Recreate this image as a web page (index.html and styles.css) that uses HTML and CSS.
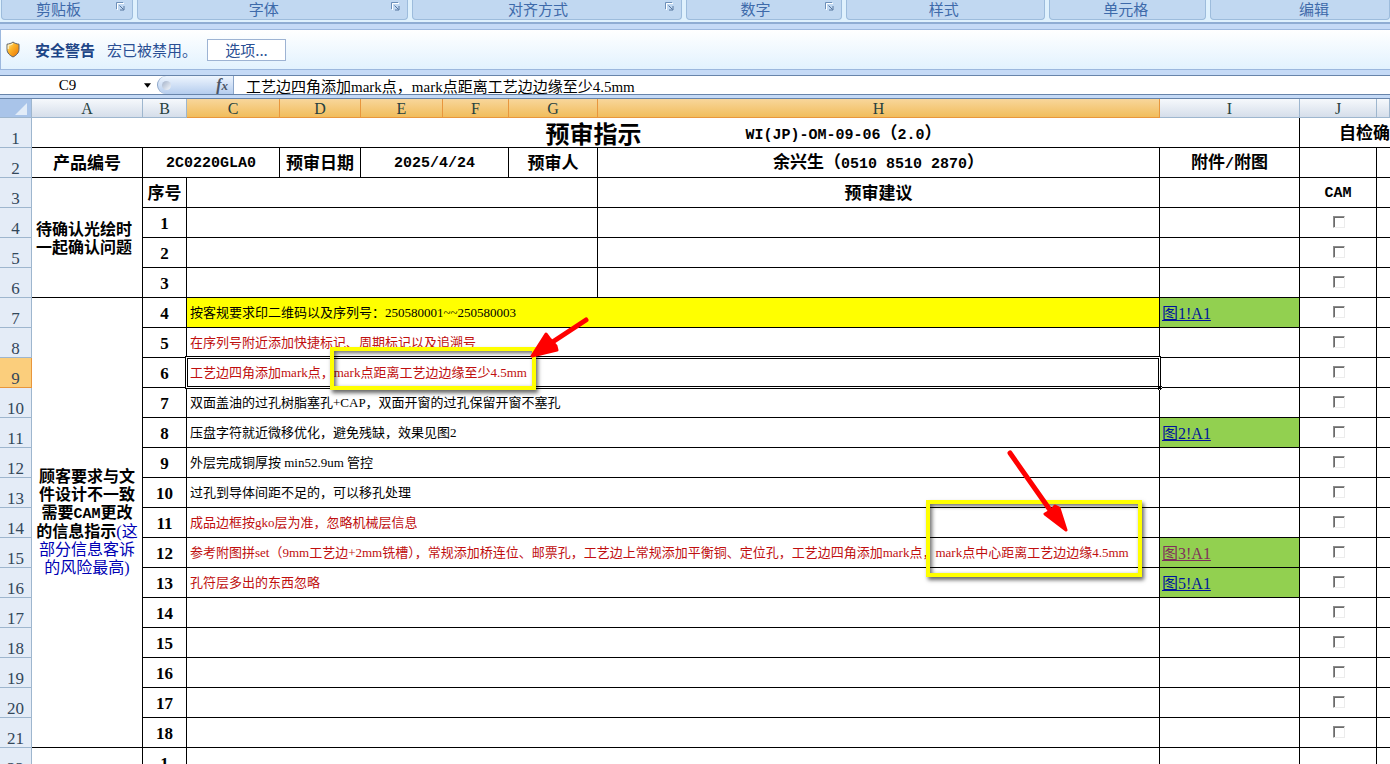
FILE: index.html
```html
<!DOCTYPE html>
<html lang="zh-CN">
<head>
    <meta charset="UTF-8">
    <meta name="viewport" content="width=device-width, initial-scale=1.0">
    <title>预审指示</title>
    <link rel="stylesheet" href="styles.css">
</head>
<body>
    <svg width="0" height="0" class="defs">
        <symbol id="launcher" viewBox="0 0 11 11">
            <path d="M1.5 8V1.5H8" fill="none" stroke="#6d8fb8"/>
            <path d="M2.5 9V2.5H9" fill="none" stroke="#fff"/>
            <path d="M4.5 4.5l4 4M9 5v4H5" fill="none" stroke="#55749e"/>
        </symbol>
    </svg>

    <!-- 功能区 -->
    <div class="ribbon">
        <div class="group g1"><span>剪贴板</span><svg class="launcher"><use href="#launcher"/></svg></div>
        <div class="group g2"><span>字体</span><svg class="launcher"><use href="#launcher"/></svg></div>
        <div class="group g3"><span>对齐方式</span><svg class="launcher"><use href="#launcher"/></svg></div>
        <div class="group g4"><span>数字</span><svg class="launcher"><use href="#launcher"/></svg></div>
        <div class="group g5"><span>样式</span></div>
        <div class="group g6"><span>单元格</span></div>
        <div class="group g7"><span>编辑</span></div>
    </div>

    <!-- 安全警告 -->
    <div class="warning">
        <svg class="shield" viewBox="0 0 14 17">
            <defs>
                <linearGradient id="gold" x1="0" y1="0" x2="1" y2="1">
                    <stop offset="0" stop-color="#fff3b0"/>
                    <stop offset=".4" stop-color="#fdb52a"/>
                    <stop offset="1" stop-color="#e86f00"/>
                </linearGradient>
            </defs>
            <path d="M7 1C5.5 2.3 3 3 1 3.2V8.500C1 12 4 14.500 7 16c3-1.500 6-4 6-7.500V3.200C11 3 8.500 2.300 7 1z" fill="url(#gold)" stroke="#5d6470"/>
            <path d="M7 2.500C5.500 3.600 3.800 4.100 2.200 4.300V8" fill="none" stroke="#fffbe0"/>
        </svg>
        <strong>安全警告</strong>
        <span>宏已被禁用。</span>
        <button type="button">选项...</button>
    </div>

    <!-- 编辑栏 -->
    <div class="formula">
        <input class="name-box" type="text" value="C9" aria-label="名称框">
        <svg class="arrow" viewBox="0 0 8 5"><path d="M0 0h8L4 5z"/></svg>
        <div class="fx">
            <i class="knob"></i>
            <span>f<small>x</small></span>
        </div>
        <input class="formula-text" type="text" value="工艺边四角添加mark点，mark点距离工艺边边缘至少4.5mm" aria-label="编辑栏">
    </div>

    <!-- 工作表 -->
    <div class="sheet">
        <table>
            <colgroup>
                <col class="c-row"><col class="c-a"><col class="c-b"><col class="c-c"><col class="c-d"><col class="c-e"><col class="c-f"><col class="c-g"><col><col class="c-i"><col class="c-j"><col class="c-k">
            </colgroup>
            <thead>
                <tr>
                    <th class="corner"><svg viewBox="0 0 12 12"><path d="M12 0v12H0z"/></svg></th>
                    <th>A</th><th>B</th>
                    <th class="on">C</th><th class="on">D</th><th class="on">E</th><th class="on">F</th><th class="on">G</th><th class="on">H</th>
                    <th>I</th><th>J</th><th></th>
                </tr>
            </thead>
            <tbody>
                <tr>
                    <th>1</th>
                    <td colspan="9" class="title"><span class="name">预审指示</span><span><b class="num">WI(JP)-OM-09-06</b>（<b class="num">2.0</b>）</span></td>
                    <td colspan="2" class="check-title">自检确</td>
                </tr>
                <tr class="head">
                    <th>2</th>
                    <td>产品编号</td>
                    <td colspan="2" class="num">2C0220GLA0</td>
                    <td>预审日期</td>
                    <td colspan="2" class="num">2025/4/24</td>
                    <td>预审人</td>
                    <td>余兴生（<b class="num">0510 8510 2870</b>）</td>
                    <td>附件<b class="num">/</b>附图</td>
                    <td></td><td></td>
                </tr>
                <tr class="head">
                    <th>3</th>
                    <td rowspan="4" class="note left">待确认光绘时<br>一起确认问题</td>
                    <td>序号</td>
                    <td colspan="5"></td>
                    <td>预审建议</td>
                    <td></td>
                    <td class="num">CAM</td><td></td>
                </tr>
                <tr><th>4</th><td class="no">1</td><td colspan="5"></td><td></td><td></td><td class="tick"><input type="checkbox" aria-label="CAM 4"></td><td></td></tr>
                <tr><th>5</th><td class="no">2</td><td colspan="5"></td><td></td><td></td><td class="tick"><input type="checkbox" aria-label="CAM 5"></td><td></td></tr>
                <tr><th>6</th><td class="no">3</td><td colspan="5"></td><td></td><td></td><td class="tick"><input type="checkbox" aria-label="CAM 6"></td><td></td></tr>
                <tr>
                    <th>7</th>
                    <td rowspan="15" class="note">顾客要求与文<br>件设计不一致<br>需要<b class="num">CAM</b>更改<br>的信息指示<span>(这<br>部分信息客诉<br>的风险最高)</span></td>
                    <td class="no">4</td>
                    <td colspan="6" class="text yellow">按客规要求印二维码以及序列号：250580001~~250580003</td>
                    <td class="link"><a href="#p1">图1!A1</a></td>
                    <td class="tick"><input type="checkbox" aria-label="CAM 7"></td><td></td>
                </tr>
                <tr><th>8</th><td class="no">5</td><td colspan="6" class="text red">在序列号附近添加快捷标记、周期标记以及追溯号</td><td></td><td class="tick"><input type="checkbox" aria-label="CAM 8"></td><td></td></tr>
                <tr><th class="on">9</th><td class="no">6</td><td colspan="6" class="text red selected">工艺边四角添加mark点，mark点距离工艺边边缘至少4.5mm<i class="handle"></i></td><td></td><td class="tick"><input type="checkbox" aria-label="CAM 9"></td><td></td></tr>
                <tr><th>10</th><td class="no">7</td><td colspan="6" class="text">双面盖油的过孔树脂塞孔+CAP，双面开窗的过孔保留开窗不塞孔</td><td></td><td class="tick"><input type="checkbox" aria-label="CAM 10"></td><td></td></tr>
                <tr><th>11</th><td class="no">8</td><td colspan="6" class="text">压盘字符就近微移优化，避免残缺，效果见图2</td><td class="link"><a href="#p2">图2!A1</a></td><td class="tick"><input type="checkbox" aria-label="CAM 11"></td><td></td></tr>
                <tr><th>12</th><td class="no">9</td><td colspan="6" class="text">外层完成铜厚按 min52.9um 管控</td><td></td><td class="tick"><input type="checkbox" aria-label="CAM 12"></td><td></td></tr>
                <tr><th>13</th><td class="no">10</td><td colspan="6" class="text">过孔到导体间距不足的，可以移孔处理</td><td></td><td class="tick"><input type="checkbox" aria-label="CAM 13"></td><td></td></tr>
                <tr><th>14</th><td class="no">11</td><td colspan="6" class="text red">成品边框按gko层为准，忽略机械层信息</td><td></td><td class="tick"><input type="checkbox" aria-label="CAM 14"></td><td></td></tr>
                <tr><th>15</th><td class="no">12</td><td colspan="6" class="text red">参考附图拼set（9mm工艺边+2mm铣槽），常规添加桥连位、邮票孔，工艺边上常规添加平衡铜、定位孔，工艺边四角添加mark点，mark点中心距离工艺边边缘4.5mm</td><td class="link visited"><a href="#p3">图3!A1</a></td><td class="tick"><input type="checkbox" aria-label="CAM 15"></td><td></td></tr>
                <tr><th>16</th><td class="no">13</td><td colspan="6" class="text red">孔符层多出的东西忽略</td><td class="link"><a href="#p5">图5!A1</a></td><td class="tick"><input type="checkbox" aria-label="CAM 16"></td><td></td></tr>
                <tr><th>17</th><td class="no">14</td><td colspan="6"></td><td></td><td class="tick"><input type="checkbox" aria-label="CAM 17"></td><td></td></tr>
                <tr><th>18</th><td class="no">15</td><td colspan="6"></td><td></td><td class="tick"><input type="checkbox" aria-label="CAM 18"></td><td></td></tr>
                <tr><th>19</th><td class="no">16</td><td colspan="6"></td><td></td><td class="tick"><input type="checkbox" aria-label="CAM 19"></td><td></td></tr>
                <tr><th>20</th><td class="no">17</td><td colspan="6"></td><td></td><td class="tick"><input type="checkbox" aria-label="CAM 20"></td><td></td></tr>
                <tr><th>21</th><td class="no">18</td><td colspan="6"></td><td></td><td class="tick"><input type="checkbox" aria-label="CAM 21"></td><td></td></tr>
                <tr><th>22</th><td></td><td class="no">1</td><td colspan="6"></td><td></td><td></td><td></td></tr>
            </tbody>
        </table>

        <!-- 标注 -->
        <div class="mark mark-1"></div>
        <div class="mark mark-2"></div>
        <svg class="pointer pointer-1" viewBox="0 0 60 42"><path d="M57 3L22 26" stroke="#f00" stroke-width="5" stroke-linecap="round"/><path d="M3 39L17 17L20 21L27 29L28 33z" fill="#f00" stroke="#f00" stroke-width="3" stroke-linejoin="round"/></svg>
        <svg class="pointer pointer-2" viewBox="0 0 64 84"><path d="M4 4L44 61" stroke="#f00" stroke-width="5" stroke-linecap="round"/><path d="M60 81L39 65L46 61L49 57L53 59z" fill="#f00" stroke="#f00" stroke-width="3" stroke-linejoin="round"/></svg>
    </div>
</body>
</html>
```

FILE: styles.css
```css
* {
    box-sizing: border-box;
}

body {
    display: flex;
    flex-direction: column;
    height: 100vh;
    margin: 0;
    overflow: hidden;
    background-color: #c5daf6;
    font-family: "Liberation Serif", "Noto Sans CJK SC", serif;
    color: #000;
}

.defs {
    position: absolute;
}

/* Ribbon */
.ribbon {
    display: flex;
    flex: none;
    gap: 4px;
    height: 24px;
    padding: 0 0 2px 1px;
    background-color: #dff1fd;
    border-bottom: 2px solid #8fadd3;
}

.group {
    display: flex;
    align-items: center;
    height: 20px;
    padding: 0 4px 2px 0;
    background-color: #c1d8f1;
    border: 1px solid #9dbcdc;
    border-top: none;
    border-radius: 0 0 4px 4px;
    font-family: "Noto Sans CJK SC", sans-serif;
    font-size: 15px;
    line-height: 16px;
    color: #3e6aaa;
}

.group span {
    flex: 1;
    text-align: center;
}

.launcher {
    width: 11px;
    height: 11px;
    margin: 0 2px 4px 0;
}

.g1 { flex: 1 1 132px; }
.g2 { flex: 1 1 271px; }
.g3 { flex: 1 1 270px; }
.g4 { flex: 1 1 157px; }
.g5 { flex: 1 1 199px; }
.g6 { flex: 1 1 157px; }
.g7 { flex: 1 1 180px; padding-left: 32px; }

/* Security warning */
.warning {
    display: flex;
    flex: none;
    align-items: center;
    gap: 12px;
    height: 41px;
    margin-top: 5px;
    padding-left: 4px;
    border: 1px solid #9cb8de;
    border-right: none;
    background-image: linear-gradient(#fff, #e2f2fe);
    font-family: "Noto Sans CJK SC", sans-serif;
    font-size: 15px;
    line-height: 18px;
    color: #2a4f94;
}

.warning strong {
    margin-left: 2px;
    color: #1d4587;
}

.shield {
    width: 16px;
    height: 17px;
}

.warning button {
    width: 79px;
    height: 22px;
    margin-left: -2px;
    padding: 0;
    background-color: #fff;
    border: 1px solid #9db3d3;
    font: inherit;
    color: #2a4f94;
}

/* Formula bar */
.formula {
    display: flex;
    flex: none;
    align-items: center;
    height: 20px;
    margin: 5px 0 3px;
    background-color: #fff;
    border-top: 1px solid #6784aa;
    border-bottom: 1px solid #6784aa;
}

.formula input {
    height: 18px;
    padding: 0;
    border: none;
    background: none;
    outline: none;
    font-family: "Liberation Serif", "Noto Sans CJK SC", serif;
    font-size: 15px;
    color: #000;
}

.formula .name-box {
    width: 135px;
    margin-right: 9px;
    text-align: center;
}

.arrow {
    width: 7px;
    height: 5px;
    margin-right: 6px;
}

.fx {
    display: flex;
    justify-content: space-between;
    align-items: center;
    width: 77px;
    height: 18px;
    padding: 0 5px 0 4px;
    border: 1px solid #8ba5c9;
    border-width: 0 1px;
    border-radius: 9px 0 0 9px;
    background-image: linear-gradient(#eef5fe, #b5cdee);
    font-size: 16px;
    font-style: italic;
    font-weight: bold;
    line-height: 18px;
    color: #4c5566;
}

.fx small {
    font-size: 13px;
}

.knob {
    width: 9px;
    height: 9px;
    border-radius: 50%;
    background-image: linear-gradient(135deg, #a3b2c9, #f4f8fd);
}

.formula .formula-text {
    flex: 1;
    padding-left: 12px;
}

/* Sheet */
.sheet {
    position: relative;
    flex: 1;
    min-height: 0;
    overflow: hidden;
    background-color: #fff;
    border-top: 1px solid #6784aa;
}

table {
    width: 100%;
    table-layout: fixed;
    border-collapse: separate;
    border-spacing: 0;
}

.c-row { width: 32px; }
.c-a { width: 111px; }
.c-b { width: 44px; }
.c-c { width: 93px; }
.c-d { width: 81px; }
.c-e { width: 82px; }
.c-f { width: 66px; }
.c-g { width: 89px; }
.c-i { width: 140px; }
.c-j { width: 77px; }
.c-k { width: 13px; }

th {
    padding: 0;
    background-color: #e4ecf7;
    border-right: 1px solid #9eb6ce;
    border-bottom: 1px solid #9eb6ce;
    font-size: 16px;
    font-weight: normal;
    line-height: 16px;
    color: #27413e;
}

thead th {
    height: 19px;
    padding-top: 2px;
    background-image: linear-gradient(#f6f9fc, #d5deea);
}

thead .on {
    background-image: linear-gradient(#f8d69b, #f1bd5c);
    border-color: #e8963c;
}

thead .corner {
    background: #a9c4e9;
}

.corner svg {
    display: block;
    width: 12px;
    height: 12px;
    margin: 0 4px 0 auto;
    fill: #e2ecf8;
}

tbody th {
    vertical-align: bottom;
    font-size: 17px;
    color: #33475a;
}

tbody th.on {
    background-color: #fbce7c;
    border-color: #e8963c;
}

td {
    height: 30px;
    padding: 0;
    border-right: 1px solid #000;
    border-bottom: 1px solid #000;
    line-height: 18px;
    white-space: nowrap;
    text-align: center;
}

td:last-child {
    border-right: none;
}

.title,
.check-title,
.head td {
    padding-top: 2px;
    font-size: 17px;
    font-weight: bold;
}

.title {
    padding: 4px 0 0 156px;
}

.title .name {
    margin-right: 104px;
    font-size: 24px;
    line-height: 24px;
}

.title span {
    vertical-align: middle;
}

.check-title {
    text-align: right;
}

.num,
.head .num {
    font-family: "Liberation Mono", monospace;
    font-size: 15px;
    font-weight: bold;
}

.no {
    padding-top: 2px;
    font-size: 17px;
    font-weight: bold;
}

.note,
.head .note {
    font-size: 16px;
    font-weight: bold;
}

.note .num {
    line-height: 16px;
}

.note.left {
    padding-left: 4px;
    text-align: left;
}

.note span {
    font-weight: normal;
    color: #0000b4;
}

.text {
    padding-left: 3px;
    font-size: 13px;
    text-align: left;
}

.red {
    color: #c00f0f;
}

.yellow {
    background-color: #ff0;
}

.link {
    padding: 2px 0 0 2px;
    background-color: #92d050;
    font-size: 16px;
    text-align: left;
}

.link a {
    color: #00139c;
}

.visited a {
    color: #80305c;
}

/* Active cell */
.selected {
    position: relative;
}

.selected::after {
    content: "";
    position: absolute;
    inset: 0;
    border: 1px solid #000;
    box-shadow: 0 0 0 1px #fff;
    outline: 1px solid #000;
    outline-offset: 1px;
}

.handle {
    position: absolute;
    z-index: 1;
    right: -3px;
    bottom: -3px;
    width: 5px;
    height: 5px;
    border: 1px dotted #fff;
    background-color: #000;
}

.tick input {
    appearance: none;
    display: block;
    width: 12px;
    height: 12px;
    margin: 0 auto;
    border: 1px solid;
    border-color: #8c8c8c #ececec #ececec #8c8c8c;
    box-shadow: inset 1px 1px #6b6b6b;
}

.tick {
    padding: 0 0 2px 2px;
}

/* Annotations */
.mark {
    position: absolute;
    border: 4px solid #ff0;
    box-shadow: 2px 3px 4px rgba(0, 0, 0, 0.6), inset 2px 2px 4px rgba(0, 0, 0, 0.6);
}

.mark-1 {
    left: 330px;
    top: 248px;
    width: 206px;
    height: 43px;
}

.mark-2 {
    left: 926px;
    top: 401px;
    width: 216px;
    height: 77px;
}

.pointer {
    position: absolute;
    fill: none;
}

.pointer-1 {
    left: 529px;
    top: 218px;
    width: 60px;
    height: 42px;
}

.pointer-2 {
    left: 1006px;
    top: 350px;
    width: 64px;
    height: 84px;
}
```
